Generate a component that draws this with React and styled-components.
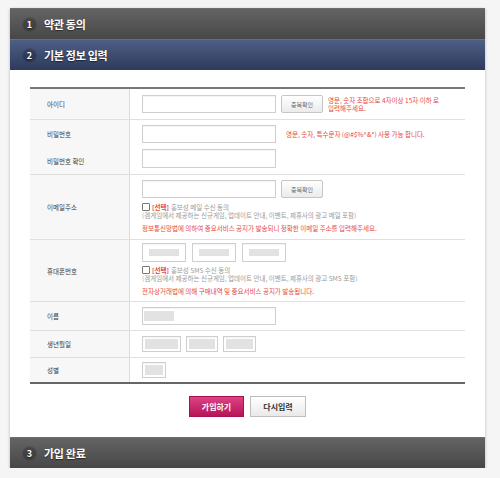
import React from 'react';
import styled, { createGlobalStyle } from 'styled-components';

const GlobalStyle = createGlobalStyle`
  body {
    margin: 0;
    background: #f5f5f5;
    font-family: "Noto Sans CJK KR", "Noto Sans", sans-serif;
  }
`;

const Page = styled.div`
  width: 475px;
  padding: 8px 15px 0 10px;
`;

const Wrap = styled.div`
  box-shadow: 0 1px 3px rgba(0, 0, 0, 0.25);
`;

const Step = styled.div`
  height: 30px;
  display: flex;
  align-items: center;
  gap: 7px;
  padding-left: 12px;
  background: ${p => p.active ? 'linear-gradient(#4e5e84, #2d3a5c)' : 'linear-gradient(#646464, #474747)'};
  border-top: 1px solid ${p => p.active ? '#5d6f98' : '#6e6e6e'};
  color: #fff;
  font-size: 11px;
  font-weight: 700;
  letter-spacing: -0.3px;
  text-shadow: 0 1px 1px rgba(0, 0, 0, 0.5);
`;

const Num = styled.span`
  width: 15px;
  height: 15px;
  border-radius: 50%;
  background: rgba(0, 0, 0, 0.22);
  box-shadow: inset 0 0 0 1px rgba(255, 255, 255, 0.06);
  display: flex;
  align-items: center;
  justify-content: center;
  font-size: 9px;
  letter-spacing: 0;
`;

const Panel = styled.div`
  background: #fff;
  padding: 17px 20px 20px;
`;

const Table = styled.div`
  border-top: 2px solid #777;
  border-bottom: 2px solid #666;
`;

const Row = styled.div`
  display: flex;
  border-bottom: 1px solid #e0e0e0;
  &:last-child { border-bottom: none; }
`;

const LabelCell = styled.div`
  width: 82px;
  flex: none;
  padding-left: 17px;
  background: #f7f7f7;
  border-right: 1px solid #dcdcdc;
  display: flex;
  flex-direction: column;
  justify-content: ${p => p.split ? 'space-around' : 'center'};
  font-size: 6.5px;
  color: #3a3a3a;
`;

const Content = styled.div`
  flex: 1;
  padding: ${p => p.pt || 6}px 0 ${p => p.pb || p.pt || 6}px 12px;
  display: flex;
  flex-direction: column;
  gap: ${p => p.gap || 0}px;
`;

const Field = styled.div`
  display: flex;
  align-items: center;
  gap: ${p => p.gap || 5}px;
`;

const Box = styled.div`
  width: ${p => p.w}px;
  height: ${p => p.h || 18}px;
  box-sizing: border-box;
  border: 1px solid #cfcfcf;
  box-shadow: inset 0 1px 1px rgba(0, 0, 0, 0.05);
  background: #fff;
  padding: ${p => p.iy || 0}px ${p => p.ix ?? p.iy ?? 0}px;
  display: flex;
`;

const Fill = styled.div`
  background: #e2e2e2;
  width: ${p => p.w ? p.w + 'px' : '100%'};
  height: 100%;
`;

const CheckBtn = styled.div`
  width: 42px;
  height: 18px;
  box-sizing: border-box;
  border: 1px solid #c6c6c6;
  border-radius: 2px;
  background: linear-gradient(#fff, #ebebeb);
  display: flex;
  align-items: center;
  justify-content: center;
  font-size: 6px;
  color: #666;
`;

const Hint = styled.div`
  color: #e5473d;
  font-size: 6.5px;
  line-height: 8px;
  margin-top: ${p => p.mt || 0}px;
`;

const Agree = styled.div`
  margin-top: ${p => p.mt || 0}px;
  font-size: 6.5px;
  line-height: 8px;
  color: #999;
`;

const AgreeLine = styled.div`
  display: flex;
  align-items: center;
  gap: 2px;
`;

const Check = styled.span`
  width: 6px;
  height: 6px;
  border: 1px solid #777;
  border-radius: 1px;
  background: #fff;
`;

const Pick = styled.b`
  color: #e5473d;
`;

const Actions = styled.div`
  display: flex;
  justify-content: center;
  gap: 6px;
  margin-top: 12px;
`;

const Button = styled.div`
  width: ${p => p.primary ? 55 : 56}px;
  height: 21px;
  box-sizing: border-box;
  display: flex;
  align-items: center;
  justify-content: center;
  font-size: 8px;
  font-weight: 700;
  border: 1px solid ${p => p.primary ? '#a8104f' : '#bdbdbd'};
  background: ${p => p.primary ? 'linear-gradient(#de4382, #b6145a)' : 'linear-gradient(#fff, #e9e9e9)'};
  color: ${p => p.primary ? '#fff' : '#333'};
`;

export default function App() {
  return (
    <Page>
      <GlobalStyle />
      <Wrap>
        <Step><Num>1</Num>약관 동의</Step>
        <Step active><Num>2</Num>기본 정보 입력</Step>
        <Panel>
          <Table>
            <Row>
              <LabelCell>아이디</LabelCell>
              <Content>
                <Field>
                  <Box w={134} />
                  <CheckBtn>중복확인</CheckBtn>
                  <Hint>영문, 숫자 조합으로 4자이상 15자 이하 로<br />입력해주세요.</Hint>
                </Field>
              </Content>
            </Row>
            <Row>
              <LabelCell split>
                <span>비밀번호</span>
                <span>비밀번호 확인</span>
              </LabelCell>
              <Content pt={5} pb={6} gap={6}>
                <Field gap={10}>
                  <Box w={134} />
                  <Hint>영문, 숫자, 특수문자 (@#$%^&*) 사용 가능 합니다.</Hint>
                </Field>
                <Field>
                  <Box w={134} h={19} />
                </Field>
              </Content>
            </Row>
            <Row>
              <LabelCell>이메일주소</LabelCell>
              <Content pt={5} pb={7}>
                <Field>
                  <Box w={134} />
                  <CheckBtn>중복확인</CheckBtn>
                </Field>
                <Agree mt={5}>
                  <AgreeLine><Check /><Pick>[선택]</Pick>홍보성 메일 수신 동의</AgreeLine>
                  (겜게임에서 제공하는 신규게임, 업데이트 안내, 이벤트, 제휴사의 광고 메일 포함)
                </Agree>
                <Hint mt={5}>정보통신망법에 의하여 중요서비스 공지가 발송되니 정확한 이메일 주소를 입력해주세요.</Hint>
              </Content>
            </Row>
            <Row>
              <LabelCell>휴대폰번호</LabelCell>
              <Content pt={3} pb={6}>
                <Field gap={6}>
                  <Box w={44} h={19} iy={5} ix={6}><Fill /></Box>
                  <Box w={44} h={19} iy={5} ix={6}><Fill /></Box>
                  <Box w={44} h={19} iy={5} ix={6}><Fill /></Box>
                </Field>
                <Agree mt={4}>
                  <AgreeLine><Check /><Pick>[선택]</Pick>홍보성 SMS 수신 동의</AgreeLine>
                  (겜게임에서 제공하는 신규게임, 업데이트 안내, 이벤트, 제휴사의 광고 SMS 포함)
                </Agree>
                <Hint mt={5}>전자상거래법에 의해 구매내역 및 중요서비스 공지가 발송됩니다.</Hint>
              </Content>
            </Row>
            <Row>
              <LabelCell>이름</LabelCell>
              <Content pt={5}>
                <Field>
                  <Box w={134} iy={3} ix={1}><Fill w={30} /></Box>
                </Field>
              </Content>
            </Row>
            <Row>
              <LabelCell>생년월일</LabelCell>
              <Content pt={5}>
                <Field>
                  <Box w={39} h={16} iy={2}><Fill /></Box>
                  <Box w={32} h={16} iy={2}><Fill /></Box>
                  <Box w={33} h={16} iy={2}><Fill /></Box>
                </Field>
              </Content>
            </Row>
            <Row>
              <LabelCell>성별</LabelCell>
              <Content pt={4}>
                <Field>
                  <Box w={24} h={16} iy={2}><Fill /></Box>
                </Field>
              </Content>
            </Row>
          </Table>
          <Actions>
            <Button primary>가입하기</Button>
            <Button>다시입력</Button>
          </Actions>
        </Panel>
        <Step><Num>3</Num>가입 완료</Step>
      </Wrap>
    </Page>
  );
}
